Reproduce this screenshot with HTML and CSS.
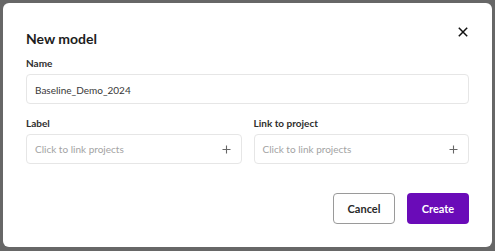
FILE: index.html
```html
<!DOCTYPE html>
<html lang="en">
<head>
  <meta charset="UTF-8">
  <title>New model</title>
  <link rel="stylesheet" href="styles.css">
</head>
<body>
  <div class="overlay">
    <div class="modal">
      <div class="modal-head">
        <h2>New model</h2>
        <button class="close-btn" type="button" aria-label="Close">
          <svg width="10" height="10" viewBox="0 0 10 10"><path d="M0.8 0.8L9.2 9.2M9.2 0.8L0.8 9.2" stroke="#111" stroke-width="1.5"/></svg>
        </button>
      </div>

      <div class="form-group">
        <label>Name</label>
        <div class="field">Baseline_Demo_2024</div>
      </div>

      <div class="form-row">
        <div class="form-group">
          <label>Label</label>
          <div class="field picker">
            <span class="placeholder">Click to link projects</span>
            <svg width="9" height="9" viewBox="0 0 9 9"><path d="M4.5 0.5v8M0.5 4.5h8" stroke="#666" stroke-width="1.1"/></svg>
          </div>
        </div>
        <div class="form-group">
          <label>Link to project</label>
          <div class="field picker">
            <span class="placeholder">Click to link projects</span>
            <svg width="9" height="9" viewBox="0 0 9 9"><path d="M4.5 0.5v8M0.5 4.5h8" stroke="#666" stroke-width="1.1"/></svg>
          </div>
        </div>
      </div>

      <div class="actions">
        <button type="button" class="cancel-btn">Cancel</button>
        <button type="button" class="create-btn">Create</button>
      </div>
    </div>
  </div>
</body>
</html>
```

FILE: styles.css
```css
* {
  margin: 0;
  padding: 0;
  box-sizing: border-box;
}

body {
  font-family: 'Lato', 'Liberation Sans', sans-serif;
  background: #676767;
  width: 495px;
  height: 251px;
  overflow: hidden;
}

.overlay {
  padding: 3px;
}

.modal {
  background: #fff;
  border-radius: 6px;
  width: 489px;
  height: 244px;
  padding: 23px 23px 0 23px;
}

.modal-head {
  display: flex;
  justify-content: space-between;
  align-items: flex-start;
  margin-bottom: 8px;
}

.modal-head h2 {
  font-size: 14px;
  line-height: 20px;
  font-weight: 700;
  color: #1d1d1d;
  margin-top: 3px;
}

.close-btn {
  background: none;
  border: none;
  width: 10px;
  height: 10px;
  margin-top: 1px;
  margin-right: 1px;
  display: flex;
}

label {
  display: block;
  font-size: 10px;
  line-height: 12px;
  font-weight: 700;
  color: #2e2e2e;
  margin-bottom: 5px;
}

.field {
  height: 30px;
  border: 1px solid #e6e6e6;
  border-radius: 4px;
  padding: 2px 8px 0 8px;
  font-size: 10px;
  line-height: 12px;
  color: #383838;
  display: flex;
  align-items: center;
}

.form-row {
  display: grid;
  grid-template-columns: 1fr 1fr;
  gap: 12px;
  margin-top: 13px;
}

.picker {
  justify-content: space-between;
  padding: 0 10px 0 8px;
}

.placeholder {
  color: #a3a3a3;
}

.actions {
  display: flex;
  justify-content: flex-end;
  gap: 12px;
  margin-top: 29px;
}

.actions button {
  font-family: inherit;
  font-size: 11px;
  font-weight: 700;
  width: 62px;
  height: 31px;
  border-radius: 4px;
  cursor: pointer;
}

.cancel-btn {
  background: #fff;
  color: #2a2a2a;
  border: 1px solid #9a9a9a;
}

.create-btn {
  background: #6a0bb8;
  color: #fff;
  border: none;
}
```
